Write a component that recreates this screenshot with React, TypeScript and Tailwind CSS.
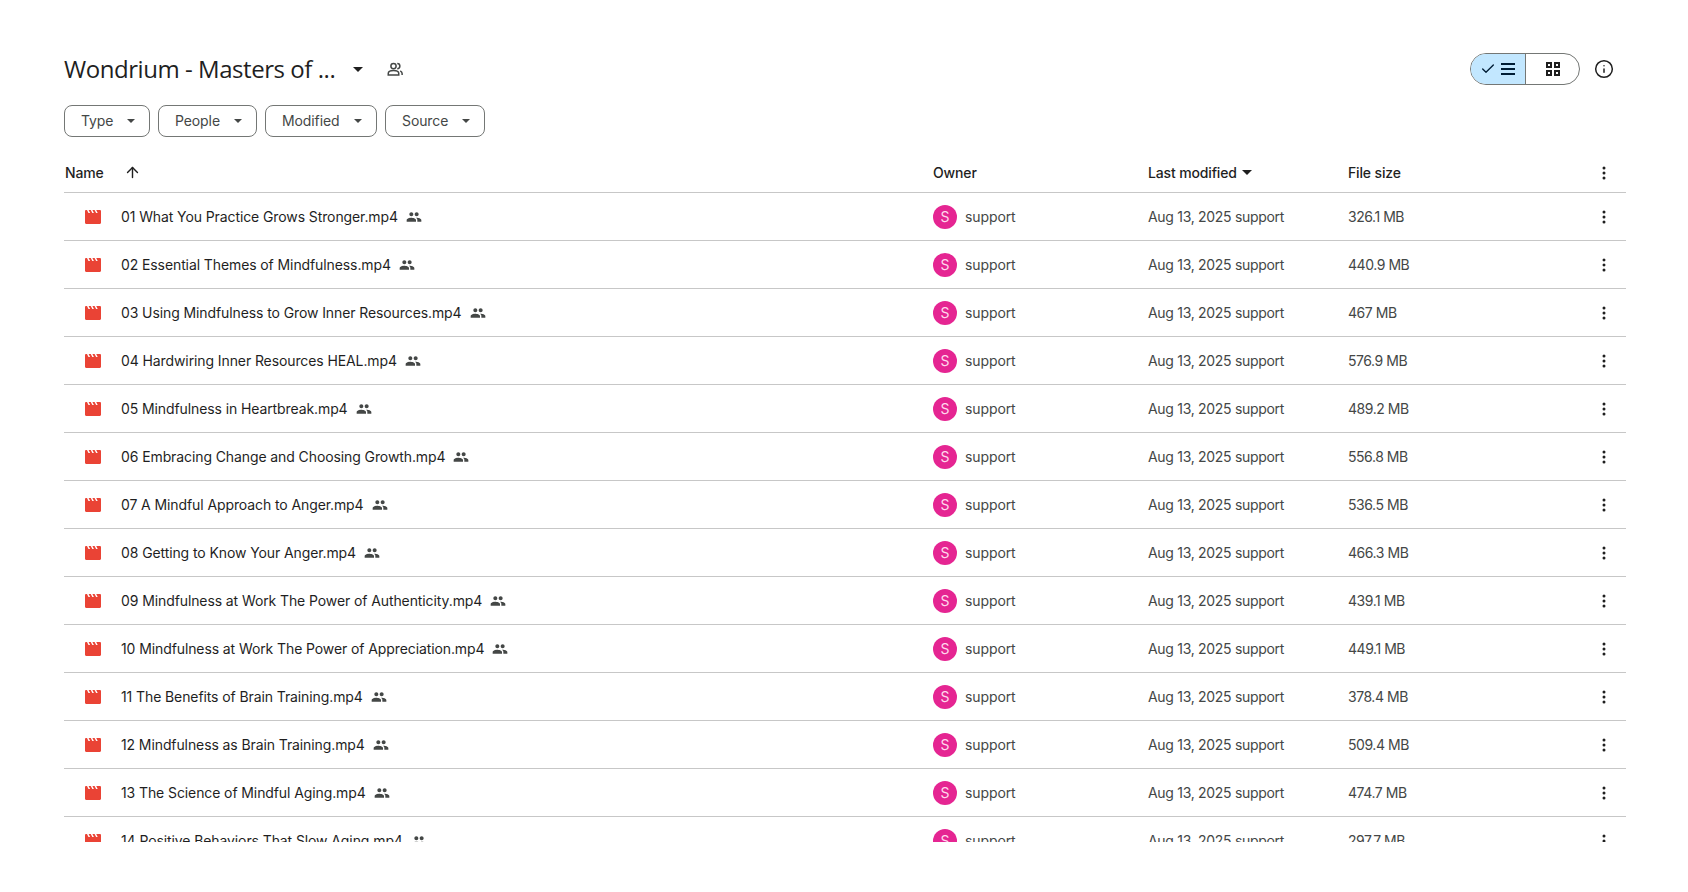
import { ArrowUp, Check, Info } from "lucide-react";

const files = [
  ["01 What You Practice Grows Stronger.mp4", "326.1 MB"],
  ["02 Essential Themes of Mindfulness.mp4", "440.9 MB"],
  ["03 Using Mindfulness to Grow Inner Resources.mp4", "467 MB"],
  ["04 Hardwiring Inner Resources HEAL.mp4", "576.9 MB"],
  ["05 Mindfulness in Heartbreak.mp4", "489.2 MB"],
  ["06 Embracing Change and Choosing Growth.mp4", "556.8 MB"],
  ["07 A Mindful Approach to Anger.mp4", "536.5 MB"],
  ["08 Getting to Know Your Anger.mp4", "466.3 MB"],
  ["09 Mindfulness at Work The Power of Authenticity.mp4", "439.1 MB"],
  ["10 Mindfulness at Work The Power of Appreciation.mp4", "449.1 MB"],
  ["11 The Benefits of Brain Training.mp4", "378.4 MB"],
  ["12 Mindfulness as Brain Training.mp4", "509.4 MB"],
  ["13 The Science of Mindful Aging.mp4", "474.7 MB"],
  ["14 Positive Behaviors That Slow Aging.mp4", "297.7 MB"],
];

const filters = [
  { label: "Type", width: "w-[86px]" },
  { label: "People", width: "w-[99px]" },
  { label: "Modified", width: "w-[112px]" },
  { label: "Source", width: "w-[100px]" },
];

const Caret = ({ className }: { className: string }) => (
  <svg viewBox="0 0 10 5" className={className} fill="currentColor">
    <path d="M0 0h10L5 5z" />
  </svg>
);

const Dots = () => (
  <svg viewBox="0 0 24 24" className="w-5 h-5 text-[#1f1f1f]" fill="currentColor">
    <circle cx="12" cy="6" r="1.8" />
    <circle cx="12" cy="12" r="1.8" />
    <circle cx="12" cy="18" r="1.8" />
  </svg>
);

const SharedIcon = () => (
  <svg viewBox="0 0 24 24" className="w-4 h-4 ml-2 shrink-0 text-[#444746]" fill="currentColor">
    <path d="M16 11c1.66 0 2.99-1.34 2.99-3S17.66 5 16 5c-1.66 0-3 1.34-3 3s1.34 3 3 3zm-8 0c1.66 0 2.99-1.34 2.99-3S9.66 5 8 5C6.34 5 5 6.34 5 8s1.34 3 3 3zm0 2c-2.33 0-7 1.17-7 3.5V19h14v-2.5c0-2.33-4.67-3.5-7-3.5zm8 0c-.29 0-.62.02-.97.05 1.16.84 1.97 1.97 1.97 3.45V19h6v-2.5c0-2.33-4.67-3.5-7-3.5z" />
  </svg>
);

const VideoIcon = () => (
  <svg viewBox="0 0 16 14" className="w-4 h-[14px] shrink-0" fill="#ea4335">
    <path d="M0 1.2C0 .5.5 0 1.2 0H2l1.5 3h1.6L3.6 0h2.2l1.5 3h1.6L7.4 0h2.2l1.5 3h1.6L11.2 0h3.6c.7 0 1.2.5 1.2 1.2v11.6c0 .7-.5 1.2-1.2 1.2H1.2C.5 14 0 13.500 0 12.800z" />
  </svg>
);

const App = () => {
  return (
    <div className="w-[1688px] h-[892px] bg-white overflow-hidden pl-[64px] pr-[62px] font-['Inter',sans-serif]">
      <div className="h-[105px] pt-[52px] flex items-start justify-between">
        <div className="flex items-center h-[34px]">
          <span className="text-[24px] text-[#1f1f1f] font-['Open_Sans',sans-serif] tracking-[-0.45px]">Wondrium - Masters of ...</span>
          <Caret className="w-[10px] h-[5px] ml-[18px] text-[#1f1f1f]" />
          <svg viewBox="0 0 24 24" className="w-[18px] h-[18px] ml-[23px] text-[#444746]" fill="none" stroke="currentColor" strokeWidth="2">
            <circle cx="10" cy="8" r="3.5" />
            <path d="M3 20v-2c0-2.500 3-4 7-4s7 1.500 7 4v2z" />
            <path d="M15 4.500a3.500 3.500 0 0 1 0 7M19 14.500c1.500.8 2.500 2 2.500 3.500v2" />
          </svg>
        </div>
        <div className="flex items-center h-[34px]">
          <div className="flex w-[110px] h-[32px] rounded-full border border-[#747775] overflow-hidden">
            <div className="w-[55px] bg-[#c2e7ff] border-r border-[#747775] flex items-center justify-center gap-[4px] text-[#001d35]">
              <Check size={16} strokeWidth={2} />
              <svg viewBox="0 0 16 14" className="w-4 h-[14px]" fill="currentColor">
                <rect x="1" y="1" width="14" height="2" />
                <rect x="1" y="6" width="14" height="2" />
                <rect x="1" y="11" width="14" height="2" />
              </svg>
            </div>
            <div className="flex-1 flex items-center justify-center text-[#1f1f1f]">
              <svg viewBox="0 0 14 14" className="w-[14px] h-[14px]" fill="none" stroke="currentColor" strokeWidth="2">
                <rect x="1" y="1" width="4" height="4" />
                <rect x="9" y="1" width="4" height="4" />
                <rect x="1" y="9" width="4" height="4" />
                <rect x="9" y="9" width="4" height="4" />
              </svg>
            </div>
          </div>
          <div className="w-[46px] flex justify-end">
            <Info size={20} strokeWidth={1.8} className="text-[#1f1f1f] mr-[12px]" />
          </div>
        </div>
      </div>

      <div className="flex gap-2 h-[32px]">
        {filters.map((f) => (
          <div key={f.label} className={`${f.width} h-[32px] rounded-lg border border-[#747775] flex items-center justify-between pl-4 pr-[14px] pb-px text-[14px] tracking-[-0.1px] text-[#444746]`}>
            <span>{f.label}</span>
            <Caret className="w-2 h-1 text-[#444746]" />
          </div>
        ))}
      </div>

      <div className="grid grid-cols-[868px_215px_200px_1fr_44px] items-center h-[56px] pt-[16px] border-b border-[#c7c7c7] text-[14px] font-medium text-[#1f1f1f] tracking-[-0.15px] pl-px">
        <div className="flex items-center">
          Name
          <ArrowUp size={17} strokeWidth={2} className="ml-[20px] mt-[-1px]" />
        </div>
        <div>Owner</div>
        <div className="flex items-center">
          Last modified
          <Caret className="w-[10px] h-[5px] ml-[5px]" />
        </div>
        <div>File size</div>
        <div className="flex justify-center"><Dots /></div>
      </div>

      <div className="h-[649px] overflow-hidden">
        {files.map(([name, size]) => (
          <div key={name} className="grid grid-cols-[868px_215px_200px_1fr_44px] items-center h-[48px] border-b border-[#c7c7c7] text-[14px] tracking-[-0.1px] pl-px">
            <div className="flex items-center pl-5 text-[#1f1f1f]">
              <VideoIcon />
              <span className="ml-5">{name}</span>
              <SharedIcon />
            </div>
            <div className="flex items-center text-[#444746]">
              <div className="w-6 h-6 rounded-full bg-[#e52592] text-[#ffd9ec] text-[14px] flex items-center justify-center mr-2">S</div>
              support
            </div>
            <div className="text-[#444746] tracking-[-0.3px]">Aug 13, 2025 support</div>
            <div className="text-[#444746] tracking-[-0.45px]">{size}</div>
            <div className="flex justify-center"><Dots /></div>
          </div>
        ))}
      </div>
    </div>
  );
};

export default App;
